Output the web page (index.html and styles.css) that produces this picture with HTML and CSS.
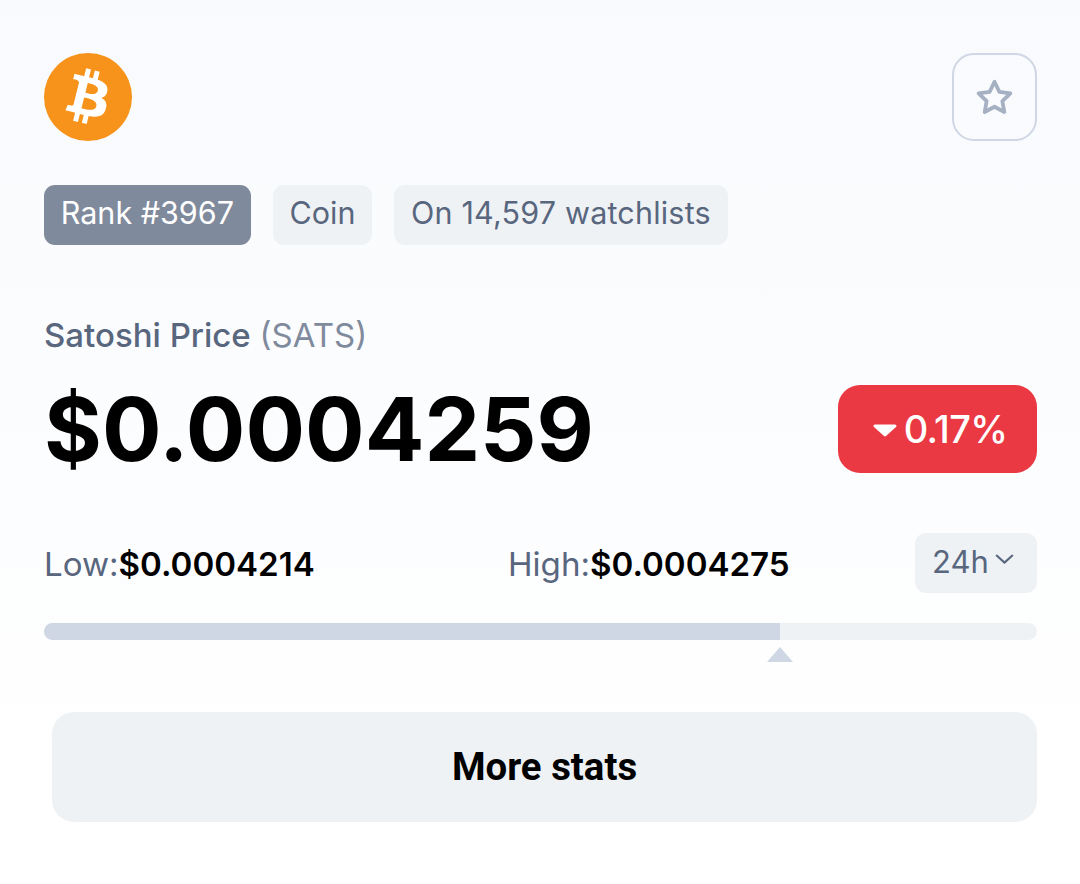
FILE: index.html
```html
<!DOCTYPE html>
<html lang="en">
<head>
  <meta charset="UTF-8" />
  <meta name="viewport" content="width=device-width, initial-scale=1.0" />
  <title>Satoshi Price</title>
  <link rel="stylesheet" href="styles.css">
</head>
<body>
  <div class="card">
    <div class="top">
      <svg class="logo" viewBox="0 0 64 64">
        <circle cx="32" cy="32" r="32" fill="#f7931a" />
        <path fill="#fff" d="M46.1 27.441c.636-4.258-2.606-6.547-7.039-8.074l1.438-5.768-3.512-.875-1.4 5.616c-.922-.23-1.87-.447-2.812-.662l1.41-5.653-3.509-.875-1.439 5.766c-.764-.174-1.514-.346-2.242-.527l.004-.018-4.842-1.209-.934 3.75s2.605.597 2.55.634c1.422.355 1.68 1.296 1.636 2.042l-1.638 6.57c.098.025.225.061.365.117l-.37-.092-2.297 9.205c-.174.432-.615 1.08-1.609.834.035.051-2.552-.637-2.552-.637l-1.743 4.02 4.57 1.139c.85.213 1.683.436 2.502.646l-1.453 5.835 3.507.875 1.44-5.772c.957.26 1.887.5 2.797.726L27.504 50.8l3.511.875 1.453-5.823c5.987 1.133 10.49.676 12.383-4.738 1.527-4.36-.075-6.875-3.225-8.516 2.294-.531 4.022-2.04 4.483-5.157zM38.08 38.69c-1.086 4.36-8.426 2.004-10.807 1.412l1.928-7.729c2.38.594 10.011 1.77 8.88 6.317zm1.085-11.312c-.99 3.966-7.1 1.951-9.083 1.457l1.748-7.01c1.983.494 8.367 1.416 7.335 5.553z" />
      </svg>
      <button class="star-btn">
        <svg viewBox="0 0 24 24" width="41" height="41" fill="none" stroke="#a6b0c3" stroke-width="2.2" stroke-linejoin="round">
          <path d="M12 2.8l2.85 5.9 6.45.9-4.7 4.5 1.15 6.4L12 17.4l-5.75 3.1 1.15-6.4-4.7-4.5 6.45-.9z" />
        </svg>
      </button>
    </div>

    <div class="tags">
      <span class="tag rank">Rank #3967</span>
      <span class="tag">Coin</span>
      <span class="tag watch">On 14,597 watchlists</span>
    </div>

    <h1 class="name">Satoshi Price <span class="symbol">(SATS)</span></h1>

    <div class="price-row">
      <div class="price">$0.0004259</div>
      <div class="change">
        <svg class="caret" viewBox="0 0 24 13" width="24" height="13"><path d="M2 2h20l-10 9z" fill="#fff" stroke="#fff" stroke-width="3" stroke-linejoin="round" /></svg>
        <span>0.17%</span>
      </div>
    </div>

    <div class="range-row">
      <div class="stat low">Low:<b>$0.0004214</b></div>
      <div class="stat high">High:<b>$0.0004275</b></div>
      <button class="period"><span>24h</span>
        <svg class="chevron" viewBox="0 0 16 16" width="25" height="25" fill="none" stroke="#58667e" stroke-width="1.3" stroke-linecap="round" stroke-linejoin="round">
          <path d="M3 5.5l5 4.5 5-4.5" />
        </svg>
      </button>
    </div>

    <div class="bar">
      <div class="bar-fill" style="width: 74.1%"></div>
      <div class="bar-mark" style="left: 74.1%"></div>
    </div>

    <button class="more">More stats</button>
  </div>
</body>
</html>
```

FILE: styles.css
```css
* {
  box-sizing: border-box;
  margin: 0;
  padding: 0;
}
body {
  height: 884px;
  overflow: hidden;
  font-family: Inter, "Liberation Sans", sans-serif;
  background: linear-gradient(#f8fafd, #ffffff 90%);
}
button {
  font-family: inherit;
  border: none;
  cursor: pointer;
}
.card {
  padding: 53px 43px 0 44px;
}
.top {
  display: flex;
  justify-content: space-between;
}
.logo {
  width: 88px;
  height: 88px;
}
.star-btn {
  display: flex;
  justify-content: center;
  align-items: center;
  width: 85px;
  height: 88px;
  background: transparent;
  border: 2px solid #cfd6e4;
  border-radius: 22px;
}
.tags {
  display: flex;
  gap: 22px;
  margin-top: 44px;
}
.tag {
  height: 60px;
  padding: 0 16.75px;
  line-height: 56px;
  font-size: 30.5px;
  color: #58667e;
  background: #eff2f5;
  border-radius: 11px;
}
.rank {
  color: #fff;
  background: #808a9d;
}
.watch {
  letter-spacing: 0.2px;
}
.name {
  margin-top: 70px;
  font-size: 33px;
  line-height: 40px;
  font-weight: 500;
  color: #58667e;
}
.symbol {
  font-weight: 400;
  color: #808a9d;
}
.price-row {
  display: flex;
  justify-content: space-between;
  align-items: center;
  margin-top: 30px;
}
.price {
  font-size: 88.4px;
  line-height: 88px;
  font-weight: 700;
  color: #000;
}
.change {
  display: flex;
  align-items: center;
  justify-content: center;
  gap: 7px;
  width: 199px;
  height: 88px;
  padding-left: 5px;
  font-size: 38px;
  font-weight: 500;
  letter-spacing: -0.7px;
  color: #fff;
  background: #ea3943;
  border-radius: 22px;
}
.caret {
  margin-top: 2px;
}
.range-row {
  display: flex;
  align-items: center;
  margin-top: 60px;
}
.stat {
  padding-top: 2px;
  font-size: 33.1px;
  color: #58667e;
}
.stat b {
  font-weight: 600;
  color: #000;
}
.low {
  width: 464px;
}
.high {
  flex: 1;
}
.period {
  display: flex;
  align-items: center;
  justify-content: center;
  gap: 3px;
  width: 122px;
  height: 60px;
  padding: 0 3px 4px 0;
  font-size: 31px;
  font-weight: 400;
  color: #58667e;
  background: #eff2f5;
  border-radius: 11px;
}
.chevron {
  margin-bottom: 4px;
}
.bar {
  position: relative;
  height: 17px;
  margin-top: 30px;
  background: #eff2f5;
  border-radius: 9px;
}
.bar-fill {
  height: 100%;
  background: #cfd6e4;
  border-radius: 9px 0 0 9px;
}
.bar-mark {
  position: absolute;
  top: 24px;
  width: 0;
  height: 0;
  margin-left: -13px;
  border-left: 13px solid transparent;
  border-right: 13px solid transparent;
  border-bottom: 15px solid #cfd6e4;
}
.more {
  display: block;
  width: 985px;
  height: 110px;
  margin: 72px 0 0 8px;
  padding-bottom: 2px;
  font-family: Roboto, sans-serif;
  font-size: 38.4px;
  font-weight: 700;
  color: #000;
  background: #eff2f5;
  border-radius: 22px;
}
```
